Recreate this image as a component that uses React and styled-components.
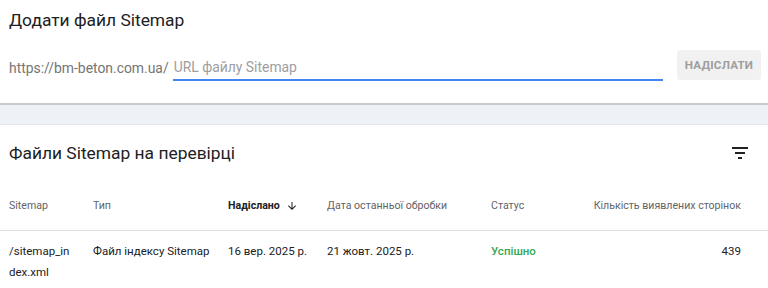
import React from "react";
import styled, { createGlobalStyle } from "styled-components";

const GlobalStyle = createGlobalStyle`
	html, body {
		margin: 0;
		padding: 0;
		background: #eef1f6;
		font-family: Roboto, "Noto Sans", "Liberation Sans", sans-serif;
		color: #202124;
	}
`;

const columns = [
	{ title: "Sitemap" },
	{ title: "Тип" },
	{ title: "Надіслано", active: true },
	{ title: "Дата останньої обробки" },
	{ title: "Статус" },
	{ title: "Кількість виявлених сторінок", right: true },
];

const rows = [
	{
		path: "/sitemap_index.xml",
		type: "Файл індексу Sitemap",
		sent: "16 вер. 2025 р.",
		processed: "21 жовт. 2025 р.",
		status: "Успішно",
		pages: 439,
	},
];

export default function App() {
	return (
		<>
			<GlobalStyle />
			<Page>
				<AddCard>
					<CardTitle>Додати файл Sitemap</CardTitle>
					<AddForm>
						<Prefix>https://bm-beton.com.ua/</Prefix>
						<UrlInput placeholder="URL файлу Sitemap" />
						<SubmitButton disabled>Надіслати</SubmitButton>
					</AddForm>
				</AddCard>
				<ListCard>
					<ListHeader>
						<ListTitle>Файли Sitemap на перевірці</ListTitle>
						<FilterButton aria-label="Фільтр">
							<svg width="16" height="12" viewBox="0 0 16 12">
								<rect x="0" y="0" width="16" height="2" fill="#202124" />
								<rect x="3" y="5" width="10" height="2" fill="#202124" />
								<rect x="6" y="10" width="4" height="2" fill="#202124" />
							</svg>
						</FilterButton>
					</ListHeader>
					<Table>
						{columns.map((c) => (
							<HeadCell key={c.title} $active={c.active} $right={c.right}>
								{c.title}
								{c.active && (
									<SortArrow width="12" height="12" viewBox="0 0 24 24">
										<path
											d="M20 12l-1.41-1.41L13 16.17V4h-2v12.17l-5.58-5.59L4 12l8 8 8-8z"
											fill="#202124"
										/>
									</SortArrow>
								)}
							</HeadCell>
						))}
						{rows.map((r) => (
							<React.Fragment key={r.path}>
								<Cell $wrap>{r.path}</Cell>
								<Cell>{r.type}</Cell>
								<Cell>{r.sent}</Cell>
								<Cell>{r.processed}</Cell>
								<Cell $status>{r.status}</Cell>
								<Cell $right>{r.pages}</Cell>
							</React.Fragment>
						))}
					</Table>
				</ListCard>
			</Page>
		</>
	);
}

const Page = styled.div`
	display: flex;
	flex-direction: column;
	gap: 19px;
	min-height: 288px;
`;

const AddCard = styled.section`
	background: #fff;
	height: 105px;
	box-sizing: border-box;
	padding: 9px 7px 0 9px;
	border-bottom: 2px solid #c9cbce;
`;

const CardTitle = styled.h2`
	margin: 0;
	font-size: 17.4px;
	font-weight: 400;
	line-height: 22px;
	color: #202124;
`;

const AddForm = styled.div`
	display: flex;
	align-items: center;
	margin-top: 24px;
`;

const Prefix = styled.span`
	flex-shrink: 0;
	white-space: nowrap;
	font-size: 13.9px;
	color: #757575;
	line-height: 20px;
	margin-top: -1px;
`;

const UrlInput = styled.input`
	flex: 1 1 auto;
	min-width: 0;
	margin-left: 4px;
	height: 26px;
	box-sizing: border-box;
	border: none;
	border-bottom: 2px solid #4285f4;
	outline: none;
	padding: 0 0 0 1px;
	font-family: inherit;
	font-size: 13.9px;
	color: #202124;
	background: transparent;
	&::placeholder {
		color: #9e9e9e;
	}
`;

const SubmitButton = styled.button`
	flex-shrink: 0;
	margin-left: 14px;
	width: 84px;
	height: 30px;
	margin-top: -6px;
	border: none;
	border-radius: 3px;
	background: #f1f1f1;
	color: #9e9e9e;
	font-family: inherit;
	font-size: 11.6px;
	font-weight: 700;
	text-transform: uppercase;
	letter-spacing: 0.2px;
	padding: 0;
`;

const ListCard = styled.section`
	background: #fff;
	flex: 1;
	border-top: 1px solid #e3e5e8;
`;

const ListHeader = styled.div`
	display: flex;
	align-items: center;
	justify-content: space-between;
	padding: 17px 20px 0 9px;
	height: 22px;
`;

const ListTitle = styled.h2`
	margin: 0;
	font-size: 17.4px;
	font-weight: 400;
	line-height: 22px;
	color: #202124;
`;

const FilterButton = styled.div`
	display: flex;
	align-items: center;
	justify-content: center;
	width: 16px;
	height: 14px;
`;

const Table = styled.div`
	display: grid;
	grid-template-columns: 84px 135px 99px 164px 1fr auto;
	padding: 17px 27px 0 9px;
`;

const HeadCell = styled.div`
	display: flex;
	align-items: center;
	justify-content: ${(p) => (p.$right ? "flex-end" : "flex-start")};
	height: 49px;
	border-bottom: 1px solid #e0e0e0;
	font-size: 10.6px;
	font-weight: ${(p) => (p.$active ? 700 : 400)};
	color: ${(p) => (p.$active ? "#202124" : "#5f6368")};
	margin-right: ${(p) => (p.$right ? "-27px" : "0")};
	padding-right: ${(p) => (p.$right ? "27px" : "0")};
	&:first-child {
		margin-left: -9px;
		padding-left: 9px;
	}
`;

const SortArrow = styled.svg`
	margin-left: 6px;
`;

const Cell = styled.div`
	padding: 10px ${(p) => (p.$wrap ? "20px" : "0")} 0 0;
	font-size: 11.5px;
	line-height: 21px;
	color: ${(p) => (p.$status ? "#34a853" : "#202124")};
	font-weight: ${(p) => (p.$status ? 500 : 400)};
	text-align: ${(p) => (p.$right ? "right" : "left")};
	word-break: ${(p) => (p.$wrap ? "break-all" : "normal")};
	white-space: ${(p) => (p.$wrap ? "normal" : "nowrap")};
`;
